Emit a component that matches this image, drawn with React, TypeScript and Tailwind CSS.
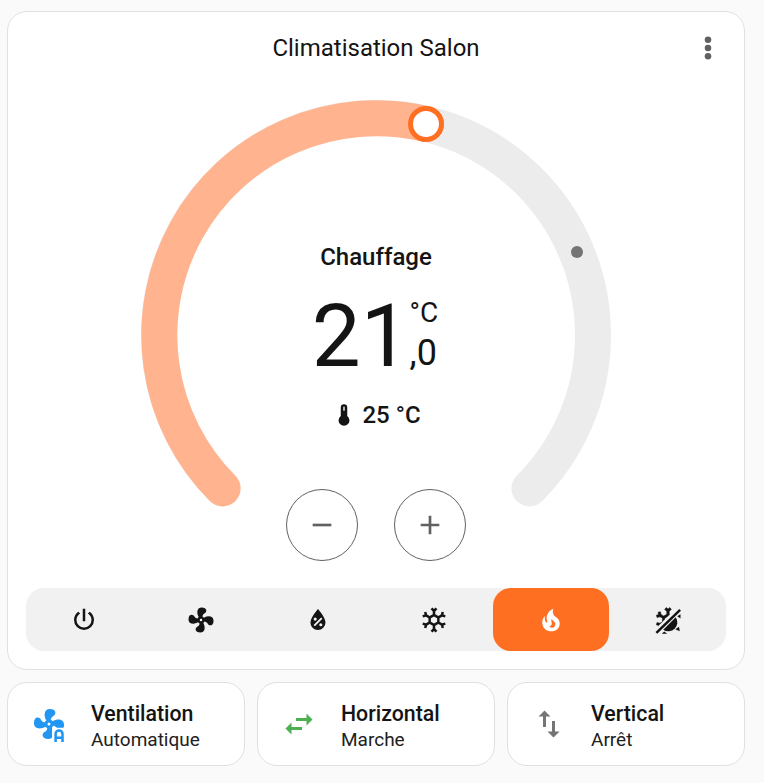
const FAN = "M12,11A1,1 0 0,0 11,12A1,1 0 0,0 12,13A1,1 0 0,0 13,12A1,1 0 0,0 12,11M12.5,2C17,2 17.11,5.57 14.75,6.75C13.76,7.24 13.32,8.29 13.13,9.22C13.61,9.42 14.03,9.73 14.35,10.13C18.05,8.13 22.03,8.92 22.03,12.5C22.03,17 18.46,17.1 17.28,14.73C16.78,13.74 15.72,13.3 14.79,13.11C14.59,13.59 14.28,14 13.88,14.34C15.87,18.03 15.08,22 11.5,22C7,22 6.91,18.42 9.27,17.24C10.25,16.75 10.69,15.71 10.89,14.79C10.4,14.59 9.97,14.27 9.65,13.87C5.96,15.85 2,15.07 2,11.5C2,7 5.56,6.89 6.74,9.26C7.24,10.25 8.29,10.68 9.22,10.87C9.41,10.39 9.73,9.97 10.14,9.65C8.15,5.96 8.94,2 12.5,2Z";
const POWER = "M16.56,5.44L15.11,6.89C16.84,7.94 18,9.83 18,12A6,6 0 0,1 12,18A6,6 0 0,1 6,12C6,9.83 7.16,7.94 8.88,6.88L7.44,5.44C5.36,6.88 4,9.28 4,12A8,8 0 0,0 12,20A8,8 0 0,0 20,12C20,9.28 18.64,6.88 16.56,5.44M13,3H11V13H13";
const DROP = "M12,3.25C12,3.25 6,10 6,14C6,17.32 8.69,20 12,20A6,6 0 0,0 18,14C18,10 12,3.25 12,3.25M14.47,9.97L15.53,11.03L9.53,17.03L8.47,15.97M9.75,10A1.25,1.25 0 0,1 11,11.25A1.25,1.25 0 0,1 9.75,12.5A1.25,1.25 0 0,1 8.5,11.25A1.25,1.25 0 0,1 9.75,10M14.25,14.5A1.25,1.25 0 0,1 15.5,15.75A1.25,1.25 0 0,1 14.25,17A1.25,1.25 0 0,1 13,15.75A1.25,1.25 0 0,1 14.25,14.5Z";
const SNOW = "M20.79,13.95L18.46,14.57L16.46,13.44V10.56L18.46,9.43L20.79,10.05L21.31,8.12L19.54,7.65L20,5.88L18.07,5.36L17.45,7.69L15.45,8.82L13,7.38V5.12L14.71,3.41L13.29,2L12,3.29L10.71,2L9.29,3.41L11,5.12V7.38L8.5,8.82L6.5,7.69L5.92,5.36L4,5.88L4.47,7.65L2.7,8.12L3.22,10.05L5.55,9.43L7.55,10.56V13.45L5.55,14.58L3.22,13.96L2.7,15.89L4.47,16.36L4,18.12L5.93,18.64L6.55,16.31L8.55,15.18L11,16.62V18.88L9.29,20.59L10.71,22L12,20.71L13.29,22L14.7,20.59L13,18.88V16.62L15.5,15.17L17.5,16.3L18.12,18.63L20,18.12L19.53,16.35L21.3,15.88L20.79,13.95M9.5,10.56L12,9.11L14.5,10.56V13.44L12,14.89L9.5,13.44V10.56Z";
const FIRE = "M17.66 11.2C17.43 10.9 17.15 10.64 16.89 10.38C16.22 9.78 15.46 9.35 14.82 8.72C13.33 7.26 13 4.85 13.95 3C13 3.23 12.17 3.75 11.46 4.32C8.87 6.4 7.85 10.07 9.07 13.22C9.11 13.32 9.15 13.42 9.15 13.55C9.15 13.77 9 13.97 8.8 14.05C8.57 14.15 8.33 14.09 8.14 13.93C8.08 13.88 8.04 13.83 8 13.76C6.87 12.33 6.69 10.28 7.45 8.64C5.78 10 4.87 12.3 5 14.47C5.06 14.97 5.12 15.47 5.29 15.97C5.43 16.57 5.7 17.17 6 17.7C7.08 19.43 8.95 20.67 10.96 20.92C13.1 21.19 15.39 20.8 17.03 19.32C18.86 17.66 19.5 15 18.56 12.72L18.43 12.46C18.22 12 17.66 11.2 17.66 11.2M14.5 17.5C14.22 17.74 13.76 18 13.4 18.1C12.28 18.5 11.16 17.94 10.5 17.28C11.69 17 12.4 16.12 12.61 15.23C12.78 14.43 12.46 13.77 12.33 13C12.21 12.26 12.23 11.63 12.5 10.94C12.69 11.32 12.89 11.7 13.13 12C13.9 13 15.11 13.44 15.37 14.8C15.41 14.94 15.43 15.08 15.43 15.23C15.46 16.05 15.1 16.95 14.5 17.5H14.5Z";
const THERMO = "M15 13V5A3 3 0 0 0 9 5V13A5 5 0 1 0 15 13ZM12 4.2A.6.6 0 0 1 12.6 4.8V8H11.4V4.8A.6.6 0 0 1 12 4.2Z";
const SWAP_H = "M21,9L17,5V8H10V10H17V13M7,11L3,15L7,19V16H14V14H7V11Z";
const SWAP_V = "M9,3L5,7H8V14H10V7H13M16,17V10H14V17H11L15,21L19,17H16Z";

function Icon({ d, className }: { d: string; className: string }) {
  return (
    <svg viewBox="0 0 24 24" className={className} fill="currentColor">
      <path d={d} />
    </svg>
  );
}

function SunSnow({ className }: { className: string }) {
  return (
    <svg viewBox="0 0 24 24" className={className} fill="currentColor">
      <defs>
        <clipPath id="flake-half">
          <polygon points="-2,-2 23,-2 -2,23" />
        </clipPath>
      </defs>
      <path d={SNOW} clipPath="url(#flake-half)" stroke="currentColor" strokeWidth="0.4" />
      <path d="M21,3.2L22.4,4.6L3.4,23L2,21.6Z" />
      <path d="M8.2,19.8A7.2,7.2 0 0 0 18.2,9.8Z" />
      <path d="M19.4,9L22,7.4V10.8Z M21.4,21L20.8,17.4L17.8,19.4Z M9,21.2L11.4,23H7Z" />
    </svg>
  );
}

function FanAuto({ className }: { className: string }) {
  return (
    <svg viewBox="0 0 24 24" className={className}>
      <defs>
        <mask id="fan-cut">
          <rect width="24" height="24" fill="white" />
          <rect x="14" y="14.5" width="10" height="10" fill="black" />
        </mask>
      </defs>
      <path d={FAN} fill="currentColor" mask="url(#fan-cut)" />
      <path
        d="M16.4,24V18.6A2.3,2.3 0 0 1 21,18.6V24M16.4,21.2H21"
        fill="none"
        stroke="currentColor"
        strokeWidth="1.7"
      />
    </svg>
  );
}

function Dial() {
  // arc centre 235,235 radius 217, gap of 90° at the bottom
  const full = "M81.6,388.4A217,217 0 1 1 388.4,388.4";
  const active = "M81.6,388.4A217,217 0 0 1 285,24";
  return (
    <svg viewBox="0 0 470 470" className="absolute inset-0 w-[470px] h-[470px]" fill="none">
      <path d={full} stroke="#ececec" strokeWidth="36" strokeLinecap="round" />
      <path d={active} stroke="#ffb38f" strokeWidth="36" strokeLinecap="round" />
      <circle cx="436" cy="152" r="6" fill="#757575" />
      <circle cx="285" cy="24" r="15.5" fill="white" stroke="#ff6f22" strokeWidth="5" />
    </svg>
  );
}

const modes = [
  { key: "off", d: POWER },
  { key: "fan", d: FAN },
  { key: "dry", d: DROP },
  { key: "cool", d: SNOW },
  { key: "heat", d: FIRE, active: true },
];

const tiles = [
  { name: "Ventilation", state: "Automatique", icon: <FanAuto className="w-9 h-9 text-[#2196f3]" /> },
  { name: "Horizontal", state: "Marche", icon: <Icon d={SWAP_H} className="w-9 h-9 text-[#4caf50]" /> },
  { name: "Vertical", state: "Arrêt", icon: <Icon d={SWAP_V} className="w-9 h-9 text-[#757575]" /> },
];

export default function App() {
  return (
    <div className="min-h-[783px] bg-[#fafafa] px-[7px] pt-[11px] font-['Roboto',sans-serif] text-[#141414]">
      <div className="w-[738px] h-[659px] bg-white border border-[#e0e0e0] rounded-[20px] px-[18px] pb-[18px] flex flex-col">
        <div className="h-[88px] shrink-0 relative flex justify-center pt-[20px]">
          <h1 className="text-[24px] leading-[32px] font-normal">Climatisation Salon</h1>
          <svg viewBox="0 0 24 24" className="absolute right-[4px] top-[22px] w-7 h-7 text-[#616161]" fill="currentColor">
            <circle cx="12" cy="5" r="2.8" />
            <circle cx="12" cy="12" r="2.8" />
            <circle cx="12" cy="19" r="2.8" />
          </svg>
        </div>

        <div className="relative w-[470px] h-[470px] self-center shrink-0">
          <Dial />
          <div className="absolute inset-0 flex flex-col items-center pt-[141px]">
            <div className="text-[24px] leading-[32px] font-medium">Chauffage</div>
            <div className="flex mt-[18px] h-[90px] pr-[2px]">
              <span className="text-[87px] leading-[90px]">21</span>
              <div className="flex flex-col pt-[2px]">
                <span className="text-[28px] leading-[40px]">°C</span>
                <span className="text-[36px] leading-[40px]">,0</span>
              </div>
            </div>
            <div className="flex items-center mt-[19px] text-[24px] leading-[30px] font-medium">
              <Icon d={THERMO} className="w-[26px] h-[26px] mr-[5px]" />
              25 °C
            </div>
            <div className="flex gap-9 mt-[59px]">
              <button className="w-[72px] h-[72px] rounded-full border border-[#616161] flex items-center justify-center text-[#616161]">
                <Icon d="M19,13H5V11H19V13Z" className="w-8 h-8" />
              </button>
              <button className="w-[72px] h-[72px] rounded-full border border-[#616161] flex items-center justify-center text-[#616161]">
                <Icon d="M19,13H13V19H11V13H5V11H11V5H13V11H19V13Z" className="w-8 h-8" />
              </button>
            </div>
          </div>
        </div>

        <div className="mt-[18px] h-[63px] shrink-0 bg-[#f1f1f1] rounded-[18px] grid grid-cols-6">
          {modes.map((m) => (
            <div
              key={m.key}
              className={
                m.active
                  ? "flex items-center justify-center rounded-[18px] bg-[#ff6f22] text-white"
                  : "flex items-center justify-center text-[#141414]"
              }
            >
              <Icon d={m.d} className="w-[30px] h-[30px]" />
            </div>
          ))}
          <div className="flex items-center justify-center text-[#141414]">
            <SunSnow className="w-[30px] h-[30px]" />
          </div>
        </div>
      </div>

      <div className="mt-3 w-[738px] grid grid-cols-3 gap-3">
        {tiles.map((t) => (
          <div key={t.name} className="h-[84px] bg-white border border-[#e0e0e0] rounded-[20px] flex items-center pl-[23px]">
            {t.icon}
            <div className="ml-[24px] flex flex-col pt-[6px]">
              <span className="text-[21.3px] leading-[26px] font-medium">{t.name}</span>
              <span className="text-[19px] leading-[26px] text-[#212121]">{t.state}</span>
            </div>
          </div>
        ))}
      </div>
    </div>
  );
}
